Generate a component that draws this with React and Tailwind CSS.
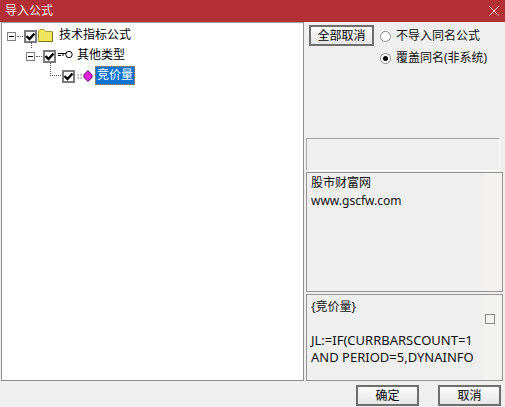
const font = "[font-family:'Noto_Sans','Noto_Sans_CJK_SC',sans-serif]";

const CheckBox = () => (
  <span className="flex h-[13px] w-[13px] shrink-0 items-center justify-center border-2 border-[#7a7a7a] bg-white">
    <svg width="9" height="9" viewBox="0 0 9 9">
      <path d="M0.5 4 L3.5 7 L8.5 1.5" fill="none" stroke="#000" strokeWidth="2.4" />
    </svg>
  </span>
);

const MinusBox = () => (
  <span className="flex h-[9px] w-[9px] shrink-0 items-center justify-center border border-[#808080] bg-white">
    <span className="h-px w-[5px] bg-black" />
  </span>
);

const Folder = () => (
  <svg width="15" height="13" viewBox="0 0 15 13" className="shrink-0">
    <path d="M0.5 12.5 V2 L2 0.5 H6 L7.5 2.5 H14.5 V12.5 Z" fill="#f7e94a" stroke="#a89a30" />
    <path d="M2 4 H13 M2 6 H13 M2 8 H13 M2 10 H13" stroke="#e0d8a0" strokeDasharray="1 1" />
    <path d="M14.5 3 V12.5 H1" fill="none" stroke="#7a7020" />
  </svg>
);

const KeyIcon = () => (
  <svg width="15" height="9" viewBox="0 0 15 9" className="shrink-0">
    <circle cx="11" cy="4.5" r="3.2" fill="#fff" stroke="#000" />
    <path d="M0 3.5 H8 M0 5.5 H3 M5 4 V6" stroke="#000" />
  </svg>
);

const GemIcon = () => (
  <svg width="16" height="12" viewBox="0 0 16 12" className="shrink-0">
    <path d="M0 5 H6 M0 8 H6" stroke="#8a8a8a" strokeDasharray="2 1" />
    <path d="M11 0.5 L15 5 L15 7.5 L11 11.5 L7 7.5 L7 4.5 Z" fill="#e81fd8" stroke="#5a1070" />
  </svg>
);

const Radio = ({ checked, label }) => (
  <div className="flex h-[22px] items-center">
    <span className="flex h-[11px] w-[11px] shrink-0 items-center justify-center rounded-full border border-[#8a8a8a] bg-white">
      {checked && <span className="h-[5px] w-[5px] rounded-full bg-black" />}
    </span>
    <span className="ml-[5px] whitespace-nowrap text-[12px] text-[#111]">{label}</span>
  </div>
);

const Btn = ({ children, className = "" }) => (
  <button className={`flex items-center justify-center border-2 border-[#6e6e6e] bg-gradient-to-b from-[#fbfbfb] to-[#e6e6e6] text-[12px] text-black ${className}`}>
    {children}
  </button>
);

export default function App() {
  return (
    <div className={`flex h-[407px] w-[505px] flex-col overflow-hidden bg-[#efefef] ${font}`}>
      <div className="flex h-[22px] shrink-0 items-center justify-between bg-[#b23035] pl-[5px] pr-[6px]">
        <span className="text-[12px] text-[#f8e6e6]">导入公式</span>
        <svg width="10" height="10" viewBox="0 0 10 10">
          <path d="M0.5 0.5 L9.5 9.5 M9.5 0.5 L0.5 9.5" stroke="#f3d6d6" />
        </svg>
      </div>

      <div className="flex flex-1 pl-px">
        <div className="flex w-[303px] shrink-0 flex-col">
          <div className="h-[359px] border border-[#8f8f8f] border-t-[#a0a0a0] bg-white pl-[5px] pt-[3px] text-[12px] text-black">
            <div className="flex h-[20px] items-center">
              <MinusBox />
              <span className="mx-[1px] w-[6px] border-t border-dotted border-[#555]" />
              <CheckBox />
              <span className="mb-[2px] ml-px"><Folder /></span>
              <span className="mb-[3px] ml-[6px]">技术指标公式</span>
            </div>
            <div className="relative flex h-[20px] items-center pl-[19px]">
              <span className="absolute left-[24px] top-[-4px] h-[6px] border-l border-dotted border-[#555]" />
              <MinusBox />
              <span className="mx-[1px] w-[6px] border-t border-dotted border-[#555]" />
              <CheckBox />
              <span className="mb-[3px] ml-[2px]"><KeyIcon /></span>
              <span className="mb-[3px] ml-[4px]">其他类型</span>
            </div>
            <div className="relative flex h-[20px] items-center pl-[55px]">
              <span className="absolute left-[43px] top-[-3px] h-[13px] w-[11px] border-b border-l border-dotted border-[#555]" />
              <CheckBox />
              <span className="ml-[2px]"><GemIcon /></span>
              <span className="mb-[2px] ml-[2px] flex h-[19px] items-center border border-dotted border-[#d08020] bg-[#0a74d0] px-[1px] text-white">竞价量</span>
            </div>
          </div>
        </div>

        <div className="flex min-w-0 flex-1 flex-col pl-[2px] pr-[2px]">
          <div className="flex h-[116px] shrink-0 items-start pl-[3px] pt-[3px]">
            <Btn className="h-[21px] w-[65px]">全部取消</Btn>
            <div className="ml-[6px] flex flex-col">
              <Radio label="不导入同名公式" />
              <Radio checked label="覆盖同名(非系统)" />
            </div>
          </div>
          <div className="mr-[3px] h-[33px] shrink-0 border border-[#a6a6a6] border-b-white border-r-white" />
          <div className="mt-px flex h-[120px] shrink-0 border border-[#949494] text-[12px] leading-[18px] text-[#111]">
            <div className="flex-1 px-[4px] py-[1px]">
              <div>股市财富网</div>
              <div>www.gscfw.com</div>
            </div>
            <div className="w-[18px] bg-[#f3f2f0]" />
          </div>
          <div className="mt-[2px] flex h-[87px] shrink-0 border border-[#949494] leading-[17px] text-[#111]">
            <div className="flex-1 whitespace-nowrap px-[4px] pt-[3px] text-[13px]">
              <div className="text-[12px]">{"{竞价量}"}</div>
              <div className="h-[17px]" />
              <div>JL:=IF(CURRBARSCOUNT=1</div>
              <div>AND PERIOD=5,DYNAINFO</div>
            </div>
            <div className="flex w-[18px] items-start bg-[#f2f2f0] pl-[1px] pt-[19px]">
              <span className="h-[10px] w-[10px] border border-[#8a8a8a]" />
            </div>
          </div>
          <div className="mt-[4px] flex">
            <Btn className="ml-[50px] h-[21px] w-[63px]">确定</Btn>
            <Btn className="ml-[19px] h-[21px] w-[63px]">取消</Btn>
          </div>
        </div>
      </div>
    </div>
  );
}
